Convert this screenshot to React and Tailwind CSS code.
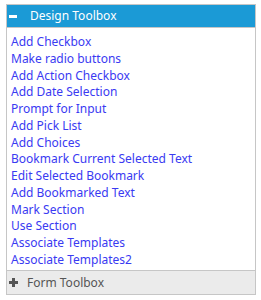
import React from 'react';

const items = [
  'Add Checkbox',
  'Make radio buttons',
  'Add Action Checkbox',
  'Add Date Selection',
  'Prompt for Input',
  'Add Pick List',
  'Add Choices',
  'Bookmark Current Selected Text',
  'Edit Selected Bookmark',
  'Add Bookmarked Text',
  'Mark Section',
  'Use Section',
  'Associate Templates',
  'Associate Templates2',
];

const App = () => {
  return (
    <div className="w-[261px] h-[300px] bg-white pt-1 pl-[6px]" style={{ fontFamily: '"Noto Sans", "Open Sans", sans-serif' }}>
      <div className="w-[250px] border border-[#c6c6c6] flex flex-col">
        <div className="h-[23px] bg-[#1b9ad6] border-b border-[#c6c6c6] flex items-center pl-[2px] text-white text-[12px]">
          <span className="w-[8px] h-[3px] bg-white mr-[13px]"></span>
          <span>Design Toolbox</span>
        </div>
        <div className="pt-[6px] pb-[2px] pl-[4px] h-[242px]">
          {items.map(item => (
            <div key={item} className="text-[12px] leading-[16.75px] text-[#3a3af2] cursor-pointer">
              {item}
            </div>
          ))}
        </div>
        <div className="h-[24px] bg-[#ebebeb] border-t border-[#c6c6c6] flex items-center pl-[2px] text-[12px] text-[#555]">
          <svg width="9" height="9" viewBox="0 0 9 9" className="mr-[9px]">
            <rect x="3" y="0" width="3" height="9" fill="#555" />
            <rect x="0" y="3" width="9" height="3" fill="#555" />
          </svg>
          <span>Form Toolbox</span>
        </div>
      </div>
    </div>
  );
};

export default App;
